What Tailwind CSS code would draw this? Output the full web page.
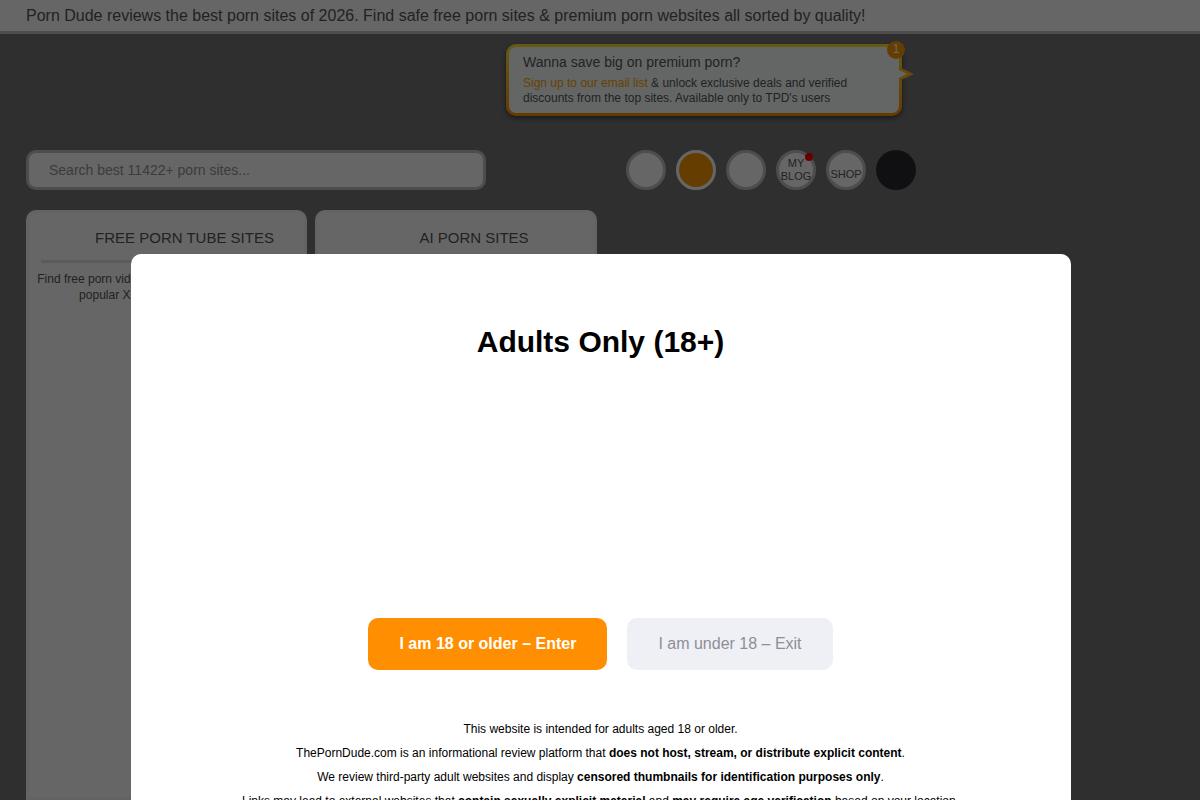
<!DOCTYPE html>
<html lang="en">
<head>
<meta charset="utf-8">
<meta name="viewport" content="width=device-width, initial-scale=1">
<title>Adults Only (18+)</title>
<script src="https://cdn.jsdelivr.net/npm/@tailwindcss/browser@4"></script>
</head>
<body class="h-screen overflow-hidden bg-[#757575] font-['Liberation_Sans',Arial,sans-serif] text-[#555]">
<div class="flex h-full flex-col">
  <header class="border-b-3 border-[#c0c0c0] bg-white px-[26px]">
    <h1 class="text-base leading-[31px]">Porn Dude reviews the best porn sites of 2026. Find safe free porn sites &amp; premium porn websites all sorted by quality!</h1>
  </header>

  <main class="flex flex-1 flex-col px-[26px] pt-[10px]">
    <!-- Email list bubble -->
    <aside class="relative ml-[480px] w-[396px] rounded-[10px] bg-linear-to-b from-[#ffe033] to-[#ff9000] p-[3px] shadow-[0_2px_5px_rgba(0,0,0,0.5)]">
      <div class="rounded-[7px] bg-[#f9ffff] px-[14px] pt-[6px] pb-[7px]">
        <p class="text-sm leading-[18px]">Wanna save big on premium porn?</p>
        <p class="pt-[5px] text-xs leading-[15px]"><a href="#" class="text-[#ffa500]">Sign up to our email list</a> &amp; unlock exclusive deals and verified discounts from the top sites. Available only to TPD's users</p>
      </div>
      <svg class="absolute top-[23px] -right-3 h-[14px] w-[15px]" viewBox="0 0 15 14" aria-hidden="true">
        <path d="M0 0 L15 7 L0 14Z" fill="#ffb819"/>
        <path d="M0 3 L8 7 L0 11Z" fill="#f9ffff"/>
      </svg>
      <span class="absolute -top-[3px] -right-[3px] size-[18px] rounded-full bg-[#ff9900] text-center text-xs leading-4 text-white">1</span>
    </aside>

    <div class="mt-[34px] flex items-center gap-[140px]">
      <input type="search" aria-label="Search sites" placeholder="Search best 11422+ porn sites..." class="h-10 w-[460px] rounded-[10px] border-3 border-[#c0c0c0] bg-white px-5 text-sm placeholder:text-[#959595]">
      <nav class="flex gap-[10px] text-[11px]">
        <button aria-label="Language" class="size-10 rounded-full border-3 border-[#c0c0c0] bg-white"></button>
        <button aria-label="Theme" class="size-10 rounded-full border-3 border-white bg-[#ff9900]"></button>
        <button aria-label="Account" class="size-10 rounded-full border-3 border-[#c0c0c0] bg-white"></button>
        <a href="#" class="relative flex size-10 items-center justify-center rounded-full border-3 border-[#c0c0c0] bg-white text-center leading-[13px]">MY<br>BLOG<span class="absolute top-0 right-0 size-2 rounded-full bg-[#ff0000]"></span></a>
        <a href="#" class="flex size-10 items-end justify-center rounded-full border-3 border-[#c0c0c0] bg-white pb-[6px] leading-[13px]">SHOP</a>
        <button aria-label="Community" class="size-10 rounded-full bg-[#2a2a2e]"></button>
      </nav>
    </div>

    <div class="mt-5 flex flex-1 gap-2">
      <section class="w-[281px] rounded-t-[10px] border-3 border-[#f8f8f8] bg-white px-3 pt-3">
        <h2 class="border-b-3 border-[#e4e4e4] pb-[9px] pl-9 text-center text-[15px] leading-[26px]"><a href="#">FREE PORN TUBE SITES</a></h2>
        <p class="-mx-2 pt-2 text-center text-xs leading-4 whitespace-nowrap">Find free porn videos on any of the world's most,<br>popular XXX porn tube websites!</p>
      </section>
      <section class="w-[282px] rounded-t-[10px] border-3 border-[#f8f8f8] bg-white px-3 pt-3">
        <h2 class="border-b-3 border-[#e4e4e4] pb-[9px] pl-9 text-center text-[15px] leading-[26px]"><a href="#">AI PORN SITES</a></h2>
      </section>
    </div>
  </main>
</div>

<!-- Age gate -->
<div class="fixed inset-0 flex items-start justify-center overflow-hidden bg-black/60 pt-[254px] pl-0.5">
  <div role="dialog" aria-modal="true" aria-labelledby="gate-title" class="w-[940px] max-w-full rounded-[10px] bg-white pt-[70px] pr-[41px] pb-10 pl-10 text-center text-black">
    <h2 id="gate-title" class="text-[30px] leading-9 font-bold">Adults Only (18+)</h2>
    <div class="mt-[258px] flex justify-center gap-5 text-base">
      <button class="h-[52px] rounded-[10px] bg-[#ff8f00] px-[31px] font-bold text-white">I am 18 or older – Enter</button>
      <button class="h-[52px] rounded-[10px] bg-[#eff0f5] px-[31px] text-[#8e8e96]">I am under 18 – Exit</button>
    </div>
    <div class="mt-[47px] text-xs leading-6">
      <p>This website is intended for adults aged 18 or older.</p>
      <p>ThePornDude.com is an informational review platform that <strong>does not host, stream, or distribute explicit content</strong>.</p>
      <p>We review third-party adult websites and display <strong>censored thumbnails for identification purposes only</strong>.</p>
      <p>Links may lead to external websites that <strong>contain sexually explicit material</strong> and <strong>may require age verification</strong> based on your location.</p>
    </div>
  </div>
</div>
</body>
</html>
